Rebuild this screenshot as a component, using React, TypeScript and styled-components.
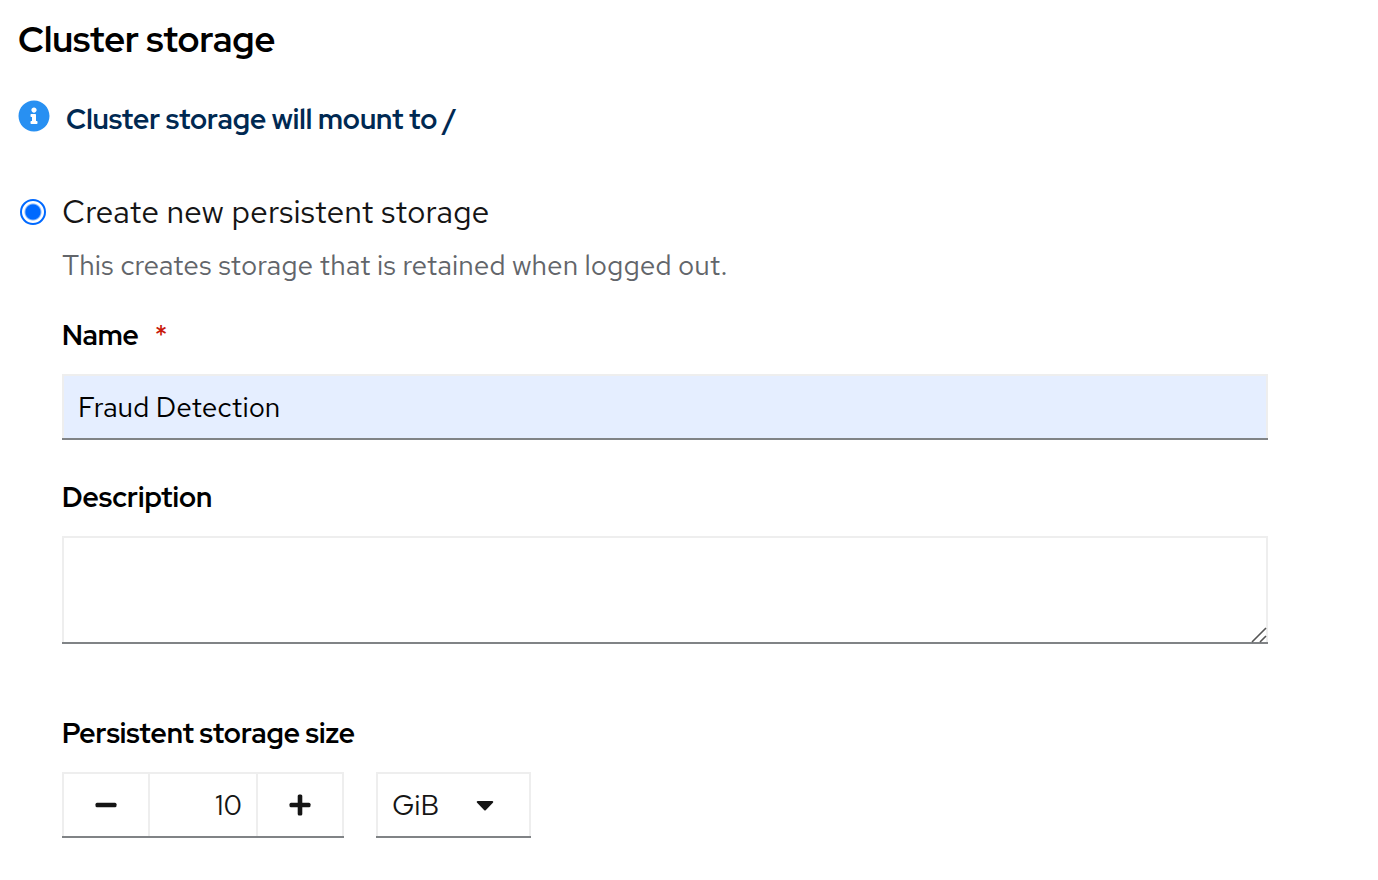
import React, { useState } from "react";
import styled, { createGlobalStyle, css } from "styled-components";

const GlobalStyle = createGlobalStyle`
  *, *::before, *::after { box-sizing: border-box; }
  body {
    margin: 0;
    background: #fff;
    color: #151515;
    font-family: "Red Hat Text", Lato, "Liberation Sans", sans-serif;
    font-size: 28px;
    line-height: 42px;
  }
`;

const displayFont = css`
  font-family: "Red Hat Display", "Red Hat Text", Lato, "Liberation Sans", sans-serif;
  font-weight: 700;
`;

const Section = styled.main`
  padding: 16px 110px 40px 18px;
`;

const Title = styled.h2`
  ${displayFont}
  margin: 0;
  color: #000;
  font-size: 36px;
  line-height: 46px;
`;

const Alert = styled.div`
  ${displayFont}
  display: flex;
  gap: 16px;
  margin-top: 36px;
  color: #002952;

  svg {
    flex: none;
    width: 32px;
    height: 32px;
    margin-top: 2px;
  }
`;

const RadioRow = styled.div`
  display: flex;
  align-items: center;
  margin-top: 48px;
  font-size: 32px;
  line-height: 48px;
`;

const Radio = styled.input`
  appearance: none;
  flex: none;
  width: 26px;
  height: 26px;
  margin: 0 16px 0 2px;
  border: 2px solid #767676;
  border-radius: 50%;

  &:checked {
    border-color: #0069ff;
    background: radial-gradient(circle, #0069ff 7px, #fff 9px);
  }
`;

const Body = styled.div`
  padding-left: 44px;
`;

const Hint = styled.p`
  margin: 8px 0 0;
  color: #62656a;
`;

const Group = styled.div<{ $gap: number }>`
  display: flex;
  flex-direction: column;
  gap: 18px;
  margin-top: ${(p) => p.$gap}px;
`;

const Label = styled.label`
  ${displayFont}
  color: #000;
`;

const Required = styled.span`
  margin-left: 16px;
  color: #c9190b;
  font-weight: 500;
`;

const field = css`
  display: block;
  border: 0;
  border-radius: 0;
  margin: 0;
  background: #fff;
  box-shadow: inset 0 -2px #808386, inset 0 0 0 2px #eee;
  color: #151515;
  font: inherit;
  outline: none;
`;

const TextInput = styled.input`
  ${field}
  width: 100%;
  height: 66px;
  padding: 0 16px;
  background: #e5eeff;
  color: #000;
`;

const AreaWrap = styled.div`
  position: relative;
`;

const TextArea = styled.textarea`
  ${field}
  width: 100%;
  height: 108px;
  padding: 12px 16px;
  resize: none;
`;

const Grip = styled.svg`
  position: absolute;
  right: 1px;
  bottom: 1px;
  width: 16px;
  height: 16px;
  pointer-events: none;
`;

const SizeRow = styled.div`
  display: flex;
  gap: 32px;
`;

const Stepper = styled.div`
  display: flex;
`;

const StepButton = styled.button`
  ${field}
  display: flex;
  align-items: center;
  justify-content: center;
  width: 88px;
  height: 66px;
  padding: 0;
`;

const NumberInput = styled.input`
  ${field}
  width: 110px;
  height: 66px;
  margin: 0 -2px;
  padding: 0 16px;
  text-align: right;
`;

const SelectWrap = styled.div`
  position: relative;
`;

const Select = styled.select`
  ${field}
  appearance: none;
  width: 155px;
  height: 66px;
  padding: 0 16px;
`;

const Caret = styled.svg`
  position: absolute;
  top: 28px;
  right: 37px;
  width: 18px;
  height: 11px;
  pointer-events: none;
`;

export default function App() {
  const [size, setSize] = useState(10);
  return (
    <>
      <GlobalStyle />
      <Section>
        <Title>Cluster storage</Title>
        <Alert>
          <svg viewBox="0 0 512 512" aria-hidden="true">
            <path
              fill="#2890f2"
              d="M256 8C119 8 8 119 8 256s111 248 248 248 248-111 248-248S393 8 256 8zm0 110c23 0 42 19 42 42s-19 42-42 42-42-19-42-42 19-42 42-42zm56 254c0 7-5 12-12 12h-88c-7 0-12-5-12-12v-24c0-7 5-12 12-12h12v-64h-12c-7 0-12-5-12-12v-24c0-7 5-12 12-12h64c7 0 12 5 12 12v100h12c7 0 12 5 12 12v24z"
            />
          </svg>
          <span>Cluster storage will mount to /</span>
        </Alert>
        <RadioRow>
          <Radio type="radio" id="create" name="storage" defaultChecked />
          <label htmlFor="create">Create new persistent storage</label>
        </RadioRow>
        <Body>
          <Hint>This creates storage that is retained when logged out.</Hint>
          <Group $gap={28}>
            <Label htmlFor="name">
              Name<Required aria-hidden="true">*</Required>
            </Label>
            <TextInput id="name" type="text" defaultValue="Fraud Detection" required />
          </Group>
          <Group $gap={36}>
            <Label htmlFor="description">Description</Label>
            <AreaWrap>
              <TextArea id="description" />
              <Grip viewBox="0 0 16 16" aria-hidden="true">
                <path d="M1 15 15 1M9 15l6-6" stroke="#555" strokeWidth="1.6" />
              </Grip>
            </AreaWrap>
          </Group>
          <Group $gap={68}>
            <Label htmlFor="size">Persistent storage size</Label>
            <SizeRow>
              <Stepper>
                <StepButton type="button" aria-label="Minus" onClick={() => setSize(Math.max(1, size - 1))}>
                  <svg width="22" height="22" viewBox="0 0 22 22">
                    <rect x="0.500" y="8.7" width="21" height="4.6" rx="1.5" fill="#151515" />
                  </svg>
                </StepButton>
                <NumberInput
                  id="size"
                  type="text"
                  inputMode="numeric"
                  value={size}
                  onChange={(e) => setSize(Number(e.target.value) || 0)}
                />
                <StepButton type="button" aria-label="Plus" onClick={() => setSize(size + 1)}>
                  <svg width="22" height="22" viewBox="0 0 22 22">
                    <rect x="0.500" y="8.7" width="21" height="4.6" rx="1.5" fill="#151515" />
                    <rect x="8.7" y="0.500" width="4.6" height="21" rx="1.5" fill="#151515" />
                  </svg>
                </StepButton>
              </Stepper>
              <SelectWrap>
                <Select aria-label="Unit" defaultValue="GiB">
                  <option>MiB</option>
                  <option>GiB</option>
                </Select>
                <Caret viewBox="0 0 18 11" aria-hidden="true">
                  <path d="M1.800 1h14.400c1 0 1.400 1 .7 1.700l-7.200 7.600c-.4.4-1 .4-1.400 0L1.100 2.700C.4 2 .8 1 1.800 1z" fill="#151515" />
                </Caret>
              </SelectWrap>
            </SizeRow>
          </Group>
        </Body>
      </Section>
    </>
  );
}
